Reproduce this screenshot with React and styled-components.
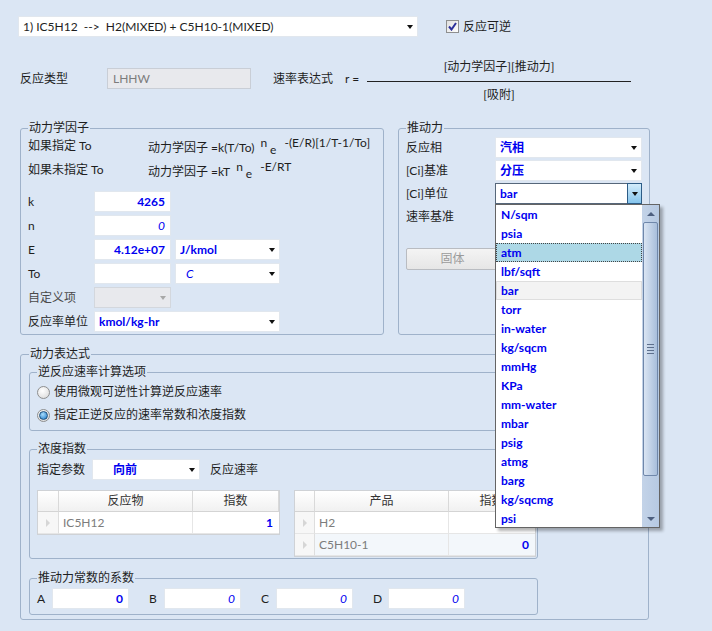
import styled, { createGlobalStyle, css } from 'styled-components'

const GlobalStyle = createGlobalStyle`
  html, body { margin: 0; padding: 0; background: #dbe6f4; }
  * { box-sizing: border-box; }
`

const Page = styled.div`
  position: relative;
  width: 712px;
  height: 631px;
  overflow: hidden;
  padding-top: 16px;
  background: #dbe6f4;
  font-family: "Lato", "Noto Sans CJK SC", sans-serif;
  font-size: 12px;
  line-height: 16px;
  color: #1e1e1e;
`

const TopRow = styled.div`
  display: flex;
  align-items: center;
  padding-left: 18px;
  height: 21px;
`

const ComboBox = styled.div`
  display: flex;
  align-items: center;
  flex: none;
  width: ${p => p.$w}px;
  height: 21px;
  padding-left: ${p => p.$pad ?? 4}px;
  background: ${p => (p.$disabled ? '#e8e9ed' : '#fff')};
  border: 1px solid ${p => (p.$active ? '#56677a' : p.$disabled ? '#d3d7dd' : '#e1e7ee')};
  white-space: pre;
`

const ComboText = styled.span`
  flex: 1;
  overflow: hidden;
`

const ArrowBtn = styled.span`
  display: flex;
  align-items: center;
  justify-content: center;
  width: 15px;
  height: 100%;
  margin-left: auto;
  ${p =>
    p.$active &&
    css`
      height: 21px;
      margin: -1px -1px -1px auto;
      background: linear-gradient(#d3ecfb, #86c5ed);
      border: 1px solid #2d5c86;
    `}
  &::after {
    content: '';
    border-left: 3.5px solid transparent;
    border-right: 3.5px solid transparent;
    border-top: 4px solid ${p => (p.$disabled ? '#a8a8a8' : '#111')};
  }
`

const Val = styled.span`
  color: ${p => (p.$gray ? '#7c7c7c' : p.$blue ? '#0000f0' : '#1e1e1e')};
  font-weight: ${p => (p.$bold ? 700 : 400)};
  font-style: ${p => (p.$italic ? 'italic' : 'normal')};
`

const CheckLabel = styled.label`
  display: flex;
  align-items: center;
  gap: 4px;
  margin-left: 28px;
`

const CheckBoxBox = styled.span`
  display: flex;
  align-items: center;
  justify-content: center;
  width: 13px;
  height: 13px;
  border: 1px solid #8e8f8f;
  background: linear-gradient(135deg, #e0e0e0, #fdfdfd);
`

const Row2 = styled.div`
  display: flex;
  align-items: flex-start;
  margin-top: 22px;
  padding-left: 20px;
  height: 44px;
`

const Inline = styled.div`
  display: flex;
  align-items: center;
  height: 21px;
  margin-top: 9px;
`

const Label = styled.span`
  flex: none;
  width: ${p => (p.$w ? `${p.$w}px` : 'auto')};
  margin-left: ${p => p.$ml ?? 0}px;
  color: ${p => (p.$dim ? '#4a4a4a' : 'inherit')};
  white-space: nowrap;
`

const TextBox = styled.div`
  flex: none;
  display: flex;
  align-items: center;
  justify-content: ${p => (p.$right ? 'flex-end' : 'flex-start')};
  width: ${p => p.$w}px;
  height: 21px;
  padding: 0 5px;
  background: ${p => (p.$disabled ? '#e8e9ed' : '#fff')};
  border: 1px solid ${p => (p.$disabled ? '#c9ced6' : '#e1e7ee')};
`

const Fraction = styled.div`
  display: flex;
  flex-direction: column;
  align-items: center;
  width: 264px;
`

const FracLine = styled.div`
  width: 100%;
  height: 1px;
  margin: 6px 0 5px;
  background: #222;
`

const GroupsRow = styled.div`
  display: flex;
  align-items: stretch;
  gap: 14px;
  margin-top: 17px;
  padding-left: 20px;
`

const Group = styled.fieldset`
  margin: ${p => p.$mt ?? 0}px 0 0 ${p => p.$ml ?? 0}px;
  min-width: 0;
  width: ${p => p.$w}px;
  padding: 0 ${p => p.$px ?? 7}px ${p => p.$pb ?? 2}px;
  border: 1px solid #9fb2ca;
  border-radius: 3px;
`

const Legend = styled.legend`
  padding: 0 1px;
  line-height: 16px;
`

const FormulaGrid = styled.div`
  display: grid;
  grid-template-columns: 120px auto;
  grid-auto-rows: 20px;
  row-gap: 4px;
  align-items: center;
  white-space: nowrap;
`

const Sup = styled.span`
  vertical-align: 5px;
  margin: 0 3px 0 6px;
`

const Low = styled.span`
  vertical-align: -2px;
  margin-right: 2px;
`

const FieldGrid = styled.div`
  display: grid;
  grid-template-columns: ${p => p.$cols};
  grid-auto-rows: 21px;
  column-gap: ${p => p.$cg ?? 0}px;
  row-gap: ${p => p.$rg ?? 3}px;
  align-items: center;
  margin-top: ${p => p.$mt ?? 0}px;
`

const Span2 = styled.div`
  grid-column: span 2;
`

const Anchor = styled.div`
  position: relative;
`

const FlatButton = styled.div`
  display: flex;
  align-items: center;
  justify-content: center;
  width: 93px;
  height: 22px;
  margin-top: 21px;
  border: 1px solid #b9bcc1;
  border-radius: 2px;
  background: linear-gradient(#f4f4f4, #e6e6e6);
  color: #9b9b9b;
`

const DropList = styled.div`
  position: absolute;
  top: 21px;
  left: 0;
  z-index: 5;
  display: flex;
  width: 165px;
  height: 324px;
  background: #fff;
  border: 1px solid #646464;
  box-shadow: 3px 3px 3px rgba(0, 0, 0, 0.3);
`

const ListItems = styled.div`
  flex: 1;
  min-width: 0;
`

const ListItem = styled.div`
  height: 19px;
  line-height: 17px;
  padding-left: 4px;
  border: 1px solid transparent;
  color: #0000f0;
  font-weight: 700;
  ${p =>
    p.$selected &&
    css`
      background: #add8e6;
      border: 1px dotted #444;
    `}
  ${p =>
    p.$hover &&
    css`
      background: #f3f3f3;
      border-color: #dedede;
    `}
`

const ScrollBar = styled.div`
  display: flex;
  flex-direction: column;
  width: 17px;
  background: linear-gradient(90deg, #c3d3e8, #b6c9e2);
`

const ScrollArrow = styled.div`
  display: flex;
  align-items: center;
  justify-content: center;
  height: 17px;
  &::after {
    content: '';
    border-left: 4px solid transparent;
    border-right: 4px solid transparent;
    ${p => (p.$down ? 'border-top' : 'border-bottom')}: 4px solid #4d5f7f;
  }
`

const Thumb = styled.div`
  display: flex;
  flex-direction: column;
  align-items: center;
  justify-content: center;
  gap: 2px;
  height: 254px;
  margin: 0 1px;
  border: 1px solid #6f87aa;
  border-radius: 2px;
  background: linear-gradient(90deg, #dae5f3, #a8bedb);
  span {
    width: 7px;
    height: 1px;
    background: #5d6f8c;
  }
`

const ScrollTrack = styled.div`
  flex: 1;
`

const OuterGroupWrap = styled.div`
  padding-left: 20px;
  margin-top: 11px;
`

const RadioRow = styled.div`
  display: flex;
  align-items: center;
  gap: 4px;
  height: 16px;
  margin-top: ${p => p.$mt}px;
`

const RadioDot = styled.span`
  display: flex;
  align-items: center;
  justify-content: center;
  width: 13px;
  height: 13px;
  border-radius: 50%;
  border: 1px solid #8e8f8f;
  background: radial-gradient(circle at 40% 35%, #ffffff, #d6d6d6);
  &::after {
    content: '';
    display: ${p => (p.$checked ? 'block' : 'none')};
    width: 7px;
    height: 7px;
    border-radius: 50%;
    border: 1px solid #1f4f7a;
    background: radial-gradient(circle at 40% 35%, #a8dcfb, #1877c9);
  }
`

const ParamRow = styled.div`
  display: flex;
  align-items: center;
  height: 21px;
  margin-top: 2px;
`

const TablesRow = styled.div`
  display: flex;
  align-items: flex-start;
  gap: 14px;
  margin-top: 10px;
`

const Table = styled.div`
  display: grid;
  grid-template-columns: ${p => p.$cols};
  grid-template-rows: 21px;
  grid-auto-rows: 22px;
  border: 1px solid #cfd2d6;
  background: #fff;
`

const HeadCell = styled.div`
  display: flex;
  align-items: center;
  justify-content: center;
  background: linear-gradient(#ffffff, #f1f1f1);
  border-right: 1px solid #d9d9d9;
  border-bottom: 1px solid #d4d4d4;
  color: #333;
  &:last-child {
    border-right: none;
  }
`

const RowHead = styled.div`
  display: flex;
  align-items: center;
  justify-content: center;
  background: #f7f7f7;
  border-right: 1px solid #dedede;
  border-bottom: 1px solid #e6e6e6;
  &::after {
    content: '';
    border-top: 4px solid transparent;
    border-bottom: 4px solid transparent;
    border-left: 4px solid #d6d6d6;
  }
`

const Cell = styled.div`
  display: flex;
  align-items: center;
  justify-content: ${p => (p.$right ? 'flex-end' : 'flex-start')};
  padding: 0 6px 0 4px;
  background: ${p => (p.$alt ? '#f3f7fb' : '#fff')};
  border-right: ${p => (p.$right ? 'none' : '1px solid #e6e6e6')};
  border-bottom: 1px solid #e6e6e6;
`

const CoefRow = styled.div`
  display: flex;
  align-items: center;
  margin-top: 2px;
`

const CoefPair = styled.div`
  display: flex;
  align-items: center;
  margin-right: 20px;
`

const units = ['N/sqm', 'psia', 'atm', 'lbf/sqft', 'bar', 'torr', 'in-water', 'kg/sqcm', 'mmHg', 'KPa', 'mm-water', 'mbar', 'psig', 'atmg', 'barg', 'kg/sqcmg', 'psi']

function Combo({ w, children, active, disabled, pad }) {
  return (
    <ComboBox $w={w} $active={active} $disabled={disabled} $pad={pad}>
      <ComboText>{children}</ComboText>
      <ArrowBtn $active={active} $disabled={disabled} />
    </ComboBox>
  )
}

function CheckMark() {
  return (
    <svg width="9" height="9" viewBox="0 0 9 9">
      <path d="M1 4.5 L3.5 7.5 L8 1" fill="none" stroke="#2b2f9a" strokeWidth="2" />
    </svg>
  )
}

export default function App() {
  return (
    <Page>
      <GlobalStyle />
      <TopRow>
        <Combo w={400}>1) IC5H12  --&gt;  H2(MIXED) + C5H10-1(MIXED)</Combo>
        <CheckLabel>
          <CheckBoxBox><CheckMark /></CheckBoxBox>
          反应可逆
        </CheckLabel>
      </TopRow>

      <Row2>
        <Inline>
          <Label $w={87}>反应类型</Label>
          <TextBox $w={144} $disabled><Val $gray>LHHW</Val></TextBox>
          <Label $w={72} $ml={22}>速率表达式</Label>
          <Label $w={22}>r =</Label>
        </Inline>
        <Fraction>
          <span>[动力学因子][推动力]</span>
          <FracLine />
          <span>[吸附]</span>
        </Fraction>
      </Row2>

      <GroupsRow>
        <Group $w={364}>
          <Legend>动力学因子</Legend>
          <FormulaGrid>
            <span>如果指定 To</span>
            <span>动力学因子 =k(T/To)<Sup>n</Sup><Low>e</Low><Sup>-(E/R)[1/T-1/To]</Sup></span>
            <span>如果未指定 To</span>
            <span>动力学因子 =kT<Sup>n</Sup><Low>e</Low><Sup>-E/RT</Sup></span>
          </FormulaGrid>
          <FieldGrid $cols="62px 77px 105px" $cg={4} $mt={11}>
            <span>k</span>
            <TextBox $w={77} $right><Val $blue $bold>4265</Val></TextBox>
            <span />
            <span>n</span>
            <TextBox $w={77} $right><Val $blue $italic>0</Val></TextBox>
            <span />
            <span>E</span>
            <TextBox $w={77} $right><Val $blue $bold>4.12e+07</Val></TextBox>
            <Combo w={105}><Val $blue $bold>J/kmol</Val></Combo>
            <span>To</span>
            <TextBox $w={77} />
            <Combo w={105} pad={10}><Val $blue $italic>C</Val></Combo>
            <Label $dim>自定义项</Label>
            <Combo w={77} disabled />
            <span />
            <span>反应率单位</span>
            <Span2>
              <Combo w={186}><Val $blue $bold>kmol/kg-hr</Val></Combo>
            </Span2>
          </FieldGrid>
        </Group>

        <Group $w={252}>
          <Legend>推动力</Legend>
          <FieldGrid $cols="89px 147px" $rg={2} $mt={1}>
            <span>反应相</span>
            <Combo w={147}><Val $blue $bold>汽相</Val></Combo>
            <span>[Ci]基准</span>
            <Combo w={147}><Val $blue $bold>分压</Val></Combo>
            <span>[Ci]单位</span>
            <Anchor>
              <Combo w={147} active><Val $blue $bold>bar</Val></Combo>
              <DropList>
                <ListItems>
                  {units.map(u => (
                    <ListItem key={u} $selected={u === 'atm'} $hover={u === 'bar'}>{u}</ListItem>
                  ))}
                </ListItems>
                <ScrollBar>
                  <ScrollArrow />
                  <Thumb><span /><span /><span /><span /></Thumb>
                  <ScrollTrack />
                  <ScrollArrow $down />
                </ScrollBar>
              </DropList>
            </Anchor>
            <span>速率基准</span>
            <span />
          </FieldGrid>
          <FlatButton>固体</FlatButton>
        </Group>
      </GroupsRow>

      <OuterGroupWrap>
        <Group $w={629} $px={8} $pb={4}>
          <Legend>动力表达式</Legend>
          <Group $w={509} $mt={2} $pb={7}>
            <Legend>逆反应速率计算选项</Legend>
            <RadioRow $mt={4}>
              <RadioDot />
              使用微观可逆性计算逆反应速率
            </RadioRow>
            <RadioRow $mt={7}>
              <RadioDot $checked />
              指定正逆反应的速率常数和浓度指数
            </RadioRow>
          </Group>

          <Group $w={509} $mt={10} $pb={1}>
            <Legend>浓度指数</Legend>
            <ParamRow>
              <Label $w={55}>指定参数</Label>
              <Combo w={108} pad={20}><Val $blue $bold>向前</Val></Combo>
              <Label $ml={10}>反应速率</Label>
            </ParamRow>
            <TablesRow>
              <Table $cols="21px 134px 86px">
                <HeadCell />
                <HeadCell>反应物</HeadCell>
                <HeadCell>指数</HeadCell>
                <RowHead />
                <Cell><Val $gray>IC5H12</Val></Cell>
                <Cell $right><Val $blue $bold>1</Val></Cell>
              </Table>
              <Table $cols="20px 134px 86px">
                <HeadCell />
                <HeadCell>产品</HeadCell>
                <HeadCell>指数</HeadCell>
                <RowHead />
                <Cell><Val $gray>H2</Val></Cell>
                <Cell $right><Val $blue $bold>0</Val></Cell>
                <RowHead />
                <Cell $alt><Val $gray>C5H10-1</Val></Cell>
                <Cell $right $alt><Val $blue $bold>0</Val></Cell>
              </Table>
            </TablesRow>
          </Group>

          <Group $w={509} $mt={11} $pb={5}>
            <Legend>推动力常数的系数</Legend>
            <CoefRow>
              {['A', 'B', 'C', 'D'].map(k => (
                <CoefPair key={k}>
                  <Label $w={15}>{k}</Label>
                  <TextBox $w={77} $right>
                    <Val $blue $bold={k === 'A'} $italic={k !== 'A'}>0</Val>
                  </TextBox>
                </CoefPair>
              ))}
            </CoefRow>
          </Group>
        </Group>
      </OuterGroupWrap>
    </Page>
  )
}
